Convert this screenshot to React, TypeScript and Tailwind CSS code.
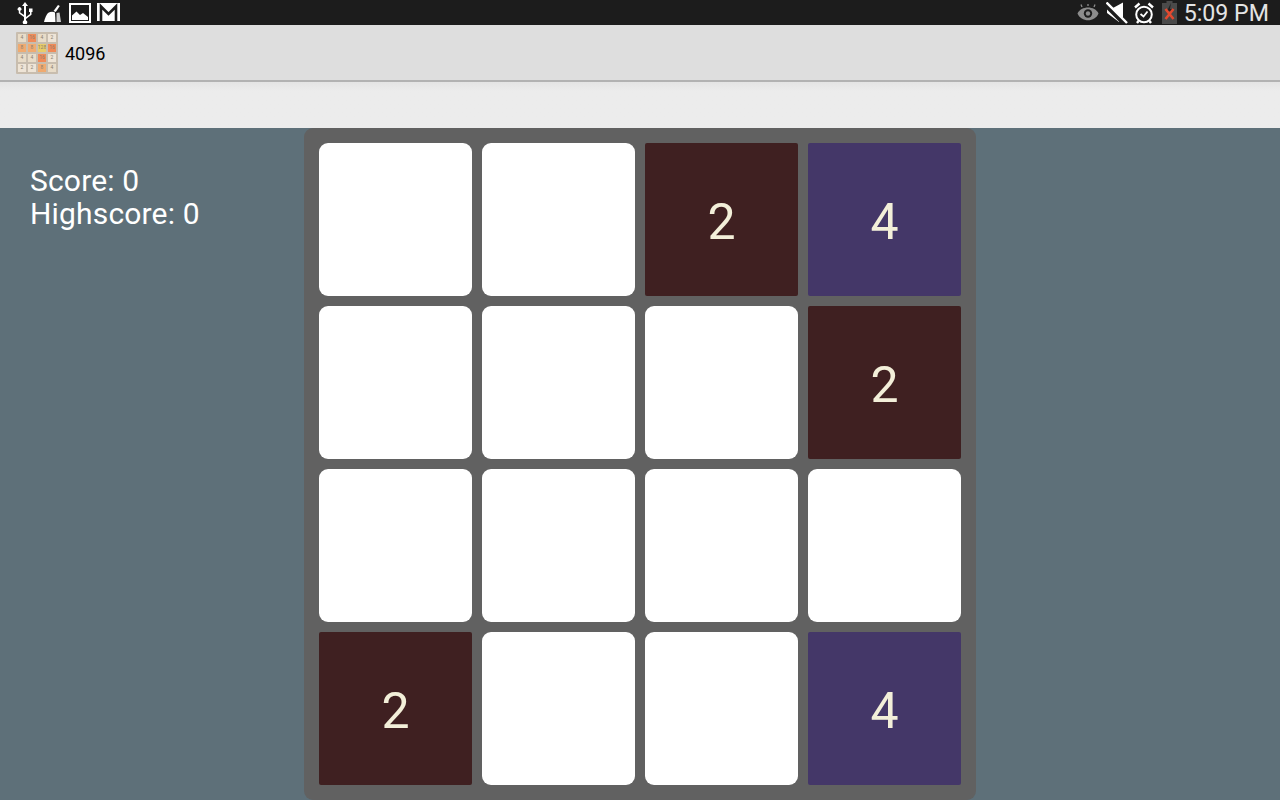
const font = { fontFamily: "Roboto, sans-serif" };

type Cell = null | 2 | 4;
const board: Cell[] = [null, null, 2, 4, null, null, null, 2, null, null, null, null, 2, null, null, 4];

function Tile({ value }: { value: Cell }) {
  if (value === null) return <div className="h-[153px] w-[153px] rounded-[9px] bg-white" />;
  return (
    <div className={`flex h-[153px] w-[153px] items-center justify-center rounded-[2px] pt-[4px] text-[50px] leading-none text-[#f3efd9] ${value === 2 ? "bg-[#3f2021]" : "bg-[#443768]"}`}>
      {value}
    </div>
  );
}

const logoCells = [
  ["4", "#e8dcc8"], ["16", "#f08a58"], ["4", "#e8dcc8"], ["2", "#eee4d6"],
  ["8", "#f0aa70"], ["8", "#f0aa70"], ["128", "#e8cc68"], ["16", "#f08a58"],
  ["4", "#e8dcc8"], ["4", "#e8dcc8"], ["16", "#f08a58"], ["2", "#eee4d6"],
  ["2", "#eee4d6"], ["2", "#eee4d6"], ["8", "#f0aa70"], ["4", "#e8dcc8"],
];

function Logo() {
  return (
    <div className="grid h-[42px] w-[42px] grid-cols-4 gap-[2px] rounded-[1px] bg-[#c8bdae] p-[2px]">
      {logoCells.map(([t, c], i) => (
        <div key={i} style={{ backgroundColor: c }} className="flex items-center justify-center overflow-hidden text-[5px] leading-none text-[#8a8070]">{t}</div>
      ))}
    </div>
  );
}

function Usb() {
  return (
    <svg width="18" height="22" viewBox="0 0 18 22" fill="#fff">
      <path d="M9 0 L12 4 H10 V15 L14 12 V10 H13 V6.500 H16.500 V10 H15.500 V12.800 L10 17 V18.200 A2.300 2.300 0 1 1 8 18.200 V15 L2.800 11.200 V8.800 A1.900 1.900 0 1 1 4.300 8.800 V10.500 L8 13 V4 H6 Z" />
    </svg>
  );
}

function Broom() {
  return (
    <svg width="18" height="17" viewBox="0 0 18 17" fill="#fff">
      <path d="M0 17 C1 13 2.500 9.500 4 8 C6.500 6.500 9 6.500 11 7.500 L11.500 17 Z" />
      <path d="M9.500 6 L14 0 L15.800 1 L11.800 7 Z" />
      <path d="M12.500 8 L15.500 7.500 L17 17 H12.500 Z" opacity="0.8" />
    </svg>
  );
}

function ImageIcon() {
  return (
    <svg width="22" height="20" viewBox="0 0 22 20">
      <rect x="1" y="1" width="20" height="18" fill="#1c1c1c" stroke="#fff" strokeWidth="2" />
      <path d="M3 17 V12.500 L7.500 8.500 L11 12 L14 10 L19 14 V17 Z" fill="#fff" />
    </svg>
  );
}

function Gmail() {
  return (
    <svg width="23" height="18" viewBox="0 0 23 18">
      <rect width="23" height="18" fill="#fff" />
      <path d="M4 18 V3.500 L11.500 11 L19 3.500 V18" fill="none" stroke="#1c1c1c" strokeWidth="2.600" />
    </svg>
  );
}

function Eye() {
  return (
    <svg width="22" height="17" viewBox="0 0 22 17">
      <path d="M0.500 9.500 C4 1.500 18 1.500 21.500 9.500 C18 18.500 4 18.500 0.500 9.500 Z" fill="#8c8c8c" />
      <circle cx="11" cy="9.500" r="4.200" fill="#1c1c1c" />
      <circle cx="11" cy="9.500" r="2.200" fill="#8c8c8c" />
      <path d="M5 3 L4 0.500 M11 2 V0 M17 3 L18 0.500" stroke="#8c8c8c" strokeWidth="1.300" />
    </svg>
  );
}

function Mute() {
  return (
    <svg width="22" height="22" viewBox="0 0 22 22">
      <path d="M1 6.500 H6 L17 0.500 V15 L13 20 L1 11 Z" fill="#fff" />
      <path d="M0 3 L20 23" stroke="#1c1c1c" strokeWidth="5" />
      <path d="M0.500 0.500 L21 21" stroke="#fff" strokeWidth="2.400" />
    </svg>
  );
}

function Alarm() {
  return (
    <svg width="20" height="22" viewBox="0 0 20 22" fill="none" stroke="#fff">
      <circle cx="10" cy="12.500" r="7.800" strokeWidth="2" />
      <path d="M6.500 12 L9.500 14.500 L13.500 9.500" strokeWidth="1.800" />
      <path d="M1 5.500 L5.500 1.500 M19 5.500 L14.500 1.500 M4.500 19 L3 21 M15.500 19 L17 21" strokeWidth="2.400" />
    </svg>
  );
}

function Battery() {
  return (
    <svg width="15" height="23" viewBox="0 0 15 23">
      <path d="M4.500 0 H10.500 V2 H15 V23 H0 V2 H4.500 Z" fill="#4a4a4a" />
      <path d="M9 2 L5 10 H8 L6 15 L11 8 H8 Z" fill="#222" />
      <path d="M3.500 8 L11.500 18 M11.500 8 L3.500 18" stroke="#e2492f" strokeWidth="2.600" />
    </svg>
  );
}

export default function App() {
  return (
    <div style={font} className="flex h-[800px] w-[1280px] flex-col overflow-hidden bg-[#5e7079]">
      <div className="flex h-[25px] shrink-0 items-center justify-between bg-[#1c1c1c] pl-[16px] pr-[11px]">
        <div className="flex items-center">
          <Usb />
          <div className="ml-[10px] mt-[1px]"><Broom /></div>
          <div className="ml-[7px]"><ImageIcon /></div>
          <div className="ml-[6px] mt-[-1px]"><Gmail /></div>
        </div>
        <div className="flex items-center">
          <Eye />
          <div className="ml-[7px]"><Mute /></div>
          <div className="ml-[6px]"><Alarm /></div>
          <div className="ml-[8px]"><Battery /></div>
          <span className="ml-[7px] pt-[1px] text-[23.200px] leading-[24px] text-[#e4e4e4]">5:09 PM</span>
        </div>
      </div>

      <div className="flex h-[57px] shrink-0 items-center border-b-2 border-[#b2b2b2] bg-[#dedede] pl-[16px]">
        <Logo />
        <span className="ml-[7px] pt-[2px] text-[18px] leading-none text-black">4096</span>
      </div>

      <div className="h-[46px] shrink-0 bg-gradient-to-b from-[#e4e4e4] to-[#ececec] to-[20%]" />

      <div className="flex min-h-0 flex-1">
        <div className="w-[304px] shrink-0 pl-[30px] pt-[36px] text-[30px] leading-[33px] tracking-[0.17px] text-white">
          <div>Score: 0</div>
          <div>Highscore: 0</div>
        </div>
        <div className="grid h-[672px] w-[672px] shrink-0 grid-cols-[repeat(4,153px)] grid-rows-[repeat(4,153px)] gap-[10px] rounded-[9px] bg-[#616161] p-[15px]">
          {board.map((v, i) => <Tile key={i} value={v} />)}
        </div>
      </div>
    </div>
  );
}
